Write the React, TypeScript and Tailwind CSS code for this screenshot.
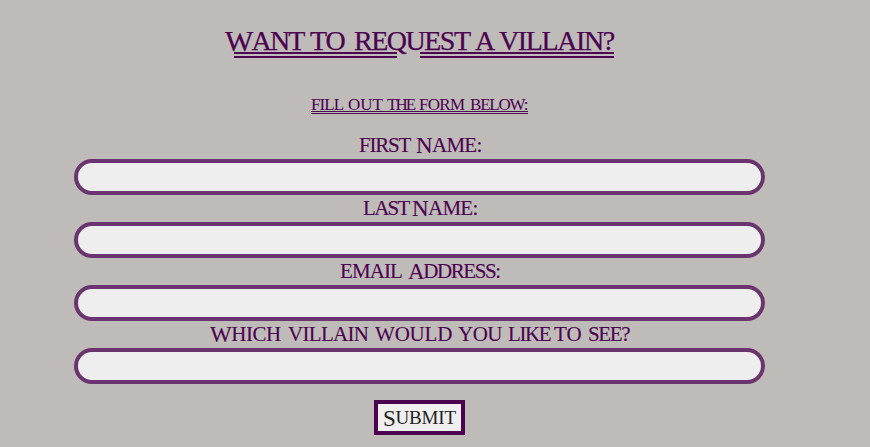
import React from "react";

type WordProps = { text: string; className: string; initial?: string };

function Word({ text, className, initial }: WordProps) {
  return (
    <span className={`block shrink-0 whitespace-nowrap ${className}`}>
      {initial ? <span className={initial}>{text[0]}</span> : text[0]}
      {text.slice(1)}
    </span>
  );
}

type FieldProps = { id: string; offset: string; words: WordProps[] };

function Field({ id, offset, words }: FieldProps) {
  return (
    <div className="h-[63px]">
      <label
        htmlFor={id}
        className={`flex h-[27px] text-[21px] leading-[27px] [-webkit-text-stroke:0.1px_#4b0150] ${offset}`}
      >
        {words.map((word) => (
          <Word key={word.text} {...word} />
        ))}
      </label>
      <input
        id={id}
        type="text"
        className="block h-9 w-[691px] rounded-full border-4 border-[#6a346e] bg-[#eeeeee] px-4 text-base outline-none"
      />
    </div>
  );
}

const swashInitial = "relative top-[1px] text-[23px] leading-none";

const fields: FieldProps[] = [
  {
    id: "first-name",
    offset: "pl-[285px]",
    words: [
      { text: "FIRST", className: "w-[57px] tracking-[-1.2px]" },
      { text: "NAME:", className: "tracking-[-0.7px]", initial: swashInitial },
    ],
  },
  {
    id: "last-name",
    offset: "pl-[289px]",
    words: [
      { text: "LAST", className: "w-[49px] tracking-[-1.7px]" },
      { text: "NAME:", className: "tracking-[-0.7px]", initial: swashInitial },
    ],
  },
  {
    id: "email",
    offset: "pl-[266px]",
    words: [
      { text: "EMAIL", className: "w-[68px] tracking-[-0.9px]" },
      { text: "ADDRESS:", className: "tracking-[-1.4px]", initial: swashInitial },
    ],
  },
  {
    id: "villain",
    offset: "pl-[136px]",
    words: [
      { text: "WHICH", className: "w-[78px] tracking-[-0.5px]", initial: swashInitial },
      { text: "VILLAIN", className: "w-[87px] tracking-[-0.7px]" },
      { text: "WOULD", className: "w-[83px] tracking-[-0.2px]" },
      { text: "YOU", className: "w-[50px] tracking-[-0.5px]" },
      { text: "LIKE", className: "w-[46px] tracking-[-1.4px]" },
      { text: "TO", className: "w-[34px]" },
      { text: "SEE?", className: "tracking-[-1.4px]" },
    ],
  },
];

export default function App() {
  return (
    <main className="h-[447px] w-[870px] overflow-hidden bg-[#bfbbb9] pl-[74px] pt-[24px] font-['Liberation_Serif',serif] text-[#4b0150]">
      <header className="h-[108px]">
        <h1 className="ml-[151px] flex h-[28px] text-[28px] leading-[34px] [-webkit-text-stroke:0.25px_#4b0150]">
          <Word text="WANT" className="w-[85px] tracking-[-1.8px]" initial="relative top-[1px] text-[30px] leading-none" />
          <Word text="TO" className="w-[44px] tracking-[-1.2px]" />
          <Word text="REQUEST" className="w-[121px] tracking-[-1.5px]" />
          <Word text="A" className="w-[24px]" />
          <Word text="VILLAIN?" className="tracking-[-1.4px]" />
        </h1>
        <div className="ml-[160px] flex gap-[23px]">
          <span className="w-[163px] border-t-[6px] border-double border-[#4b0150]" />
          <span className="w-[194px] border-t-[6px] border-double border-[#4b0150]" />
        </div>
        <h2 className="ml-[237px] mt-[37px] flex h-[16px] w-[217px] text-[17px] leading-[19px]">
          <Word text="FILL" className="w-[37px] tracking-[-0.9px]" />
          <Word text="OUT" className="w-[39px]" />
          <Word text="THE" className="w-[32px] tracking-[-2px]" />
          <Word text="FORM" className="w-[51px] tracking-[-0.7px]" />
          <Word text="BELOW:" className="tracking-[-1.2px]" />
        </h2>
        <div className="ml-[237px] w-[217px] border-t-[3px] border-double border-[#4b0150]" />
      </header>
      <form onSubmit={(event) => event.preventDefault()}>
        {fields.map((field) => (
          <Field key={field.id} {...field} />
        ))}
        <button
          type="submit"
          className="ml-[300px] mt-4 flex h-[35px] w-[91px] items-center border-4 border-[#4b0150] bg-[#efefef] pl-[5px] text-[19px] leading-[25px] text-[#222222]"
        >
          <Word text="SUBMIT" className="tracking-[-0.2px]" initial="relative top-[2px] text-[23px] leading-none" />
        </button>
      </form>
    </main>
  );
}
